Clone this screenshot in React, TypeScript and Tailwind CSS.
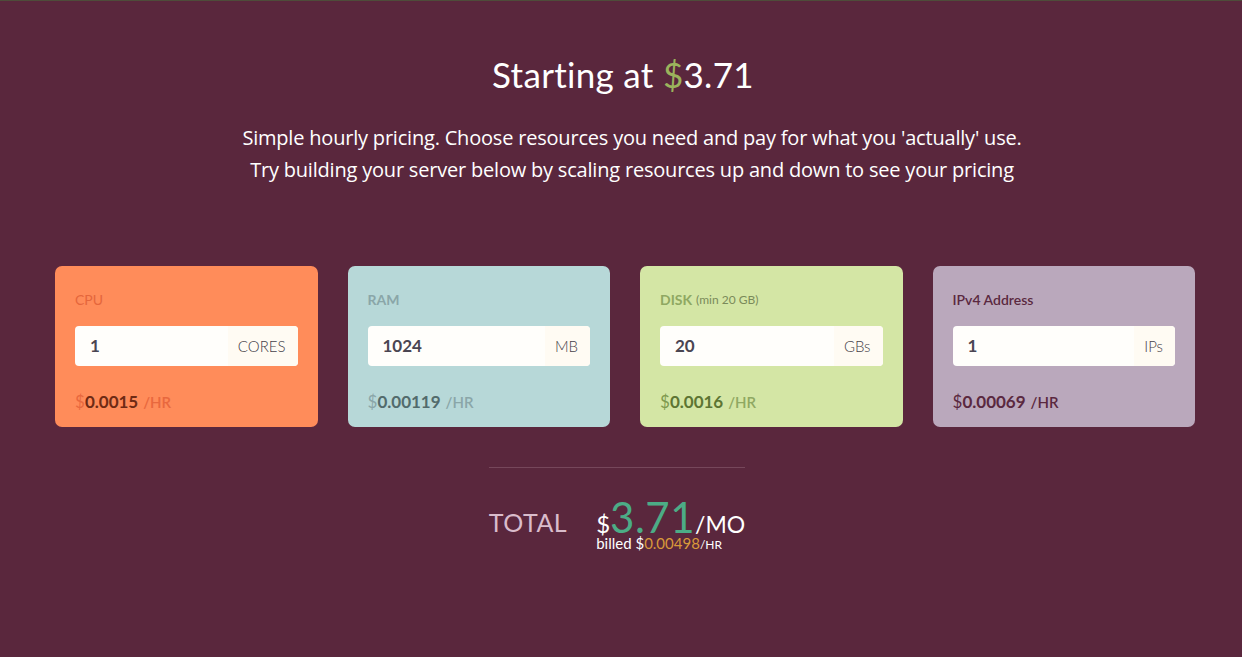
import React from "react";

interface Resource {
  label: string;
  note?: string;
  value: string;
  unit: string;
  price: string;
  cardClassName: string;
  labelClassName: string;
  dollarClassName: string;
  priceClassName: string;
  hrClassName: string;
}

const resources: Resource[] = [
  {
    label: "CPU",
    value: "1",
    unit: "CORES",
    price: "0.0015",
    cardClassName: "bg-[#ff8c5a]",
    labelClassName: "text-[#e5663c] font-normal",
    dollarClassName: "text-[#e8683e]",
    priceClassName: "text-[#6e2a14]",
    hrClassName: "text-[#e8683e]",
  },
  {
    label: "RAM",
    value: "1024",
    unit: "MB",
    price: "0.00119",
    cardClassName: "bg-[#b7d8d8]",
    labelClassName: "text-[#8aa6a8] font-bold",
    dollarClassName: "text-[#8aa6a8]",
    priceClassName: "text-[#526b6c]",
    hrClassName: "text-[#8aa6a8]",
  },
  {
    label: "DISK",
    note: "(min 20 GB)",
    value: "20",
    unit: "GBs",
    price: "0.0016",
    cardClassName: "bg-[#d4e6a5]",
    labelClassName: "text-[#8fa862] font-bold",
    dollarClassName: "text-[#7f9a4e]",
    priceClassName: "text-[#5d7533]",
    hrClassName: "text-[#8fa862]",
  },
  {
    label: "IPv4 Address",
    value: "1",
    unit: "IPs",
    price: "0.00069",
    cardClassName: "bg-[#baa8bc]",
    labelClassName: "text-[#5a2840] font-semibold",
    dollarClassName: "text-[#5a2840]",
    priceClassName: "text-[#5a2840]",
    hrClassName: "text-[#5a2840]",
  },
];

const ResourceCard = ({ r }: { r: Resource }) => (
  <div className={`flex flex-col h-[161px] rounded-[7px] px-5 pt-[26px] ${r.cardClassName}`}>
    <div className="h-[16px] flex items-center text-[14px] leading-none">
      <span className={r.labelClassName}>{r.label}</span>
      {r.note && <span className="ml-1 text-[12px] text-[#7a8a5a]">{r.note}</span>}
    </div>
    <div className="mt-[18px] flex h-[40px] rounded-[4px] overflow-hidden bg-[#fffefb]">
      <div className="flex-1 flex items-center pl-[15px] text-[17px] font-bold text-[#4a4552]">
        {r.value}
      </div>
      <div className="flex items-center pl-[10px] pr-[12px] bg-[#fffbf3] text-[15px] text-[#45424a] font-light">
        {r.unit}
      </div>
    </div>
    <div className="mt-[23px] flex items-baseline text-[17px] font-bold">
      <span className={`font-normal ${r.dollarClassName}`}>$</span>
      <span className={r.priceClassName}>{r.price}</span>
      <span className={`ml-[5px] text-[15px] font-semibold ${r.hrClassName}`}>/HR</span>
    </div>
  </div>
);

export default function App() {
  return (
    <div className="w-[1242px] h-[657px] bg-[#5a273d] border-t border-[#4e4c3a] font-['Lato',sans-serif] text-white overflow-hidden">
      <h1 className="mt-[53px] text-center text-[35px] leading-[40px] tracking-[0.3px] pl-[4px]">
        Starting at <span className="text-[#9bb35c]">$</span>3.71
      </h1>
      <div className="mt-[28px] text-center text-[20px] leading-[32px] font-['Open_Sans',sans-serif] pl-[22px] tracking-[-0.2px]">
        <p>Simple hourly pricing. Choose resources you need and pay for what you 'actually' use.</p>
        <p>Try building your server below by scaling resources up and down to see your pricing</p>
      </div>
      <div className="mt-[80px] ml-[55px] w-[1140px] grid grid-cols-4 gap-[30px]">
        {resources.map((r) => (
          <ResourceCard key={r.label} r={r} />
        ))}
      </div>
      <div className="mx-auto mt-[40px] w-[256px] h-px bg-[#76475b] -translate-x-[4px]" />
      <div className="mt-[31px] flex justify-center pr-[8px]">
        <div className="flex items-start gap-[29px]">
          <div className="mt-[11px] text-[25px] leading-none text-[#d9bccb] tracking-[0.5px]">TOTAL</div>
          <div className="flex flex-col">
            <div className="flex items-baseline h-[36px] leading-[36px]">
              <span className="text-[24px]">$</span>
              <span className="text-[42px] text-[#4cac86] tracking-[0.5px]">3.71</span>
              <span className="text-[23px]">/MO</span>
            </div>
            <div className="text-[15px] leading-[16px] flex items-baseline">
              <span>billed $</span>
              <span className="text-[#d9993a]">0.00498</span>
              <span className="text-[12px]">/HR</span>
            </div>
          </div>
        </div>
      </div>
    </div>
  );
}
